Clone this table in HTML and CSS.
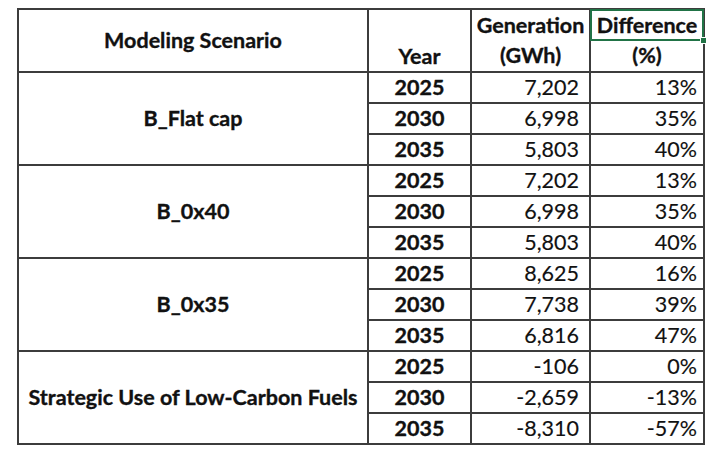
FILE: index.html
```html
<!DOCTYPE html>
<html>
<head>
<meta charset="utf-8">
<link rel="stylesheet" href="styles.css">
</head>
<body>
<table class="grid">
  <colgroup>
    <col class="c-scen">
    <col class="c-year">
    <col class="c-gen">
    <col class="c-diff">
  </colgroup>
  <thead>
    <tr class="hrow hrow-1">
      <th rowspan="2" class="scen-head">Modeling Scenario</th>
      <th rowspan="2" class="year-head">Year</th>
      <th class="gen-top">Generation</th>
      <th class="diff-top selected">Difference</th>
    </tr>
    <tr class="hrow hrow-2">
      <th class="gen-bottom">(GWh)</th>
      <th class="diff-bottom">(%)</th>
    </tr>
  </thead>
  <tbody>
    <tr><td rowspan="3" class="scen">B_Flat cap</td><td class="year">2025</td><td class="num">7,202</td><td class="pct">13%</td></tr>
    <tr><td class="year">2030</td><td class="num">6,998</td><td class="pct">35%</td></tr>
    <tr><td class="year">2035</td><td class="num">5,803</td><td class="pct">40%</td></tr>
    <tr><td rowspan="3" class="scen">B_0x40</td><td class="year">2025</td><td class="num">7,202</td><td class="pct">13%</td></tr>
    <tr><td class="year">2030</td><td class="num">6,998</td><td class="pct">35%</td></tr>
    <tr><td class="year">2035</td><td class="num">5,803</td><td class="pct">40%</td></tr>
    <tr><td rowspan="3" class="scen">B_0x35</td><td class="year">2025</td><td class="num">8,625</td><td class="pct">16%</td></tr>
    <tr><td class="year">2030</td><td class="num">7,738</td><td class="pct">39%</td></tr>
    <tr><td class="year">2035</td><td class="num">6,816</td><td class="pct">47%</td></tr>
    <tr><td rowspan="3" class="scen">Strategic Use of Low-Carbon Fuels</td><td class="year">2025</td><td class="num">-106</td><td class="pct">0%</td></tr>
    <tr><td class="year">2030</td><td class="num">-2,659</td><td class="pct">-13%</td></tr>
    <tr><td class="year">2035</td><td class="num">-8,310</td><td class="pct">-57%</td></tr>
  </tbody>
</table>
</body>
</html>
```
FILE: styles.css
```css
html, body {
  margin: 0;
  padding: 0;
  background: #ffffff;
}

body {
  padding: 8px 0 0 17px;
  font-family: Lato, "Open Sans", "Liberation Sans", sans-serif;
  color: #111111;
}

.grid {
  border-collapse: collapse;
  table-layout: fixed;
  width: 688px;
  font-size: 21.5px;
  line-height: 1.15;
}

.c-scen { width: 350px; }
.c-year { width: 103px; }
.c-gen { width: 119px; }
.c-diff { width: 114px; }

.grid th,
.grid td {
  border: 2px solid #3c3c3c;
  padding: 0;
  white-space: nowrap;
}

.grid th {
  font-weight: 700;
  -webkit-text-stroke: 0.35px #111111;
}

.hrow-1 { height: 31px; }
.hrow-2 { height: 32px; }

.grid .scen-head {
  text-align: center;
  vertical-align: middle;
}

.grid .year-head {
  text-align: center;
  vertical-align: bottom;
  padding-bottom: 2px;
}

.grid .gen-top,
.grid .diff-top {
  border-bottom: none;
  text-align: center;
  vertical-align: middle;
}

.grid .gen-bottom,
.grid .diff-bottom {
  border-top: none;
  text-align: center;
  vertical-align: middle;
}

.grid .selected {
  position: relative;
}

.grid .selected::after {
  content: "";
  position: absolute;
  left: -1px;
  top: -1px;
  right: -1px;
  bottom: -1px;
  border: 2px solid #217346;
}

.grid .selected::before {
  content: "";
  position: absolute;
  right: -4px;
  bottom: -4px;
  width: 5px;
  height: 5px;
  background: #217346;
  border: 1px solid #ffffff;
  z-index: 1;
}

.grid tbody tr {
  height: 31px;
}

.grid .scen {
  font-weight: 700;
  text-align: center;
  vertical-align: middle;
  -webkit-text-stroke: 0.35px #111111;
}

.grid .year {
  font-weight: 700;
  text-align: center;
  -webkit-text-stroke: 0.35px #111111;
}

.grid .num {
  text-align: right;
  padding-right: 10px;
  -webkit-text-stroke: 0.15px #111111;
}

.grid .pct {
  text-align: right;
  padding-right: 6px;
  -webkit-text-stroke: 0.15px #111111;
}
```
